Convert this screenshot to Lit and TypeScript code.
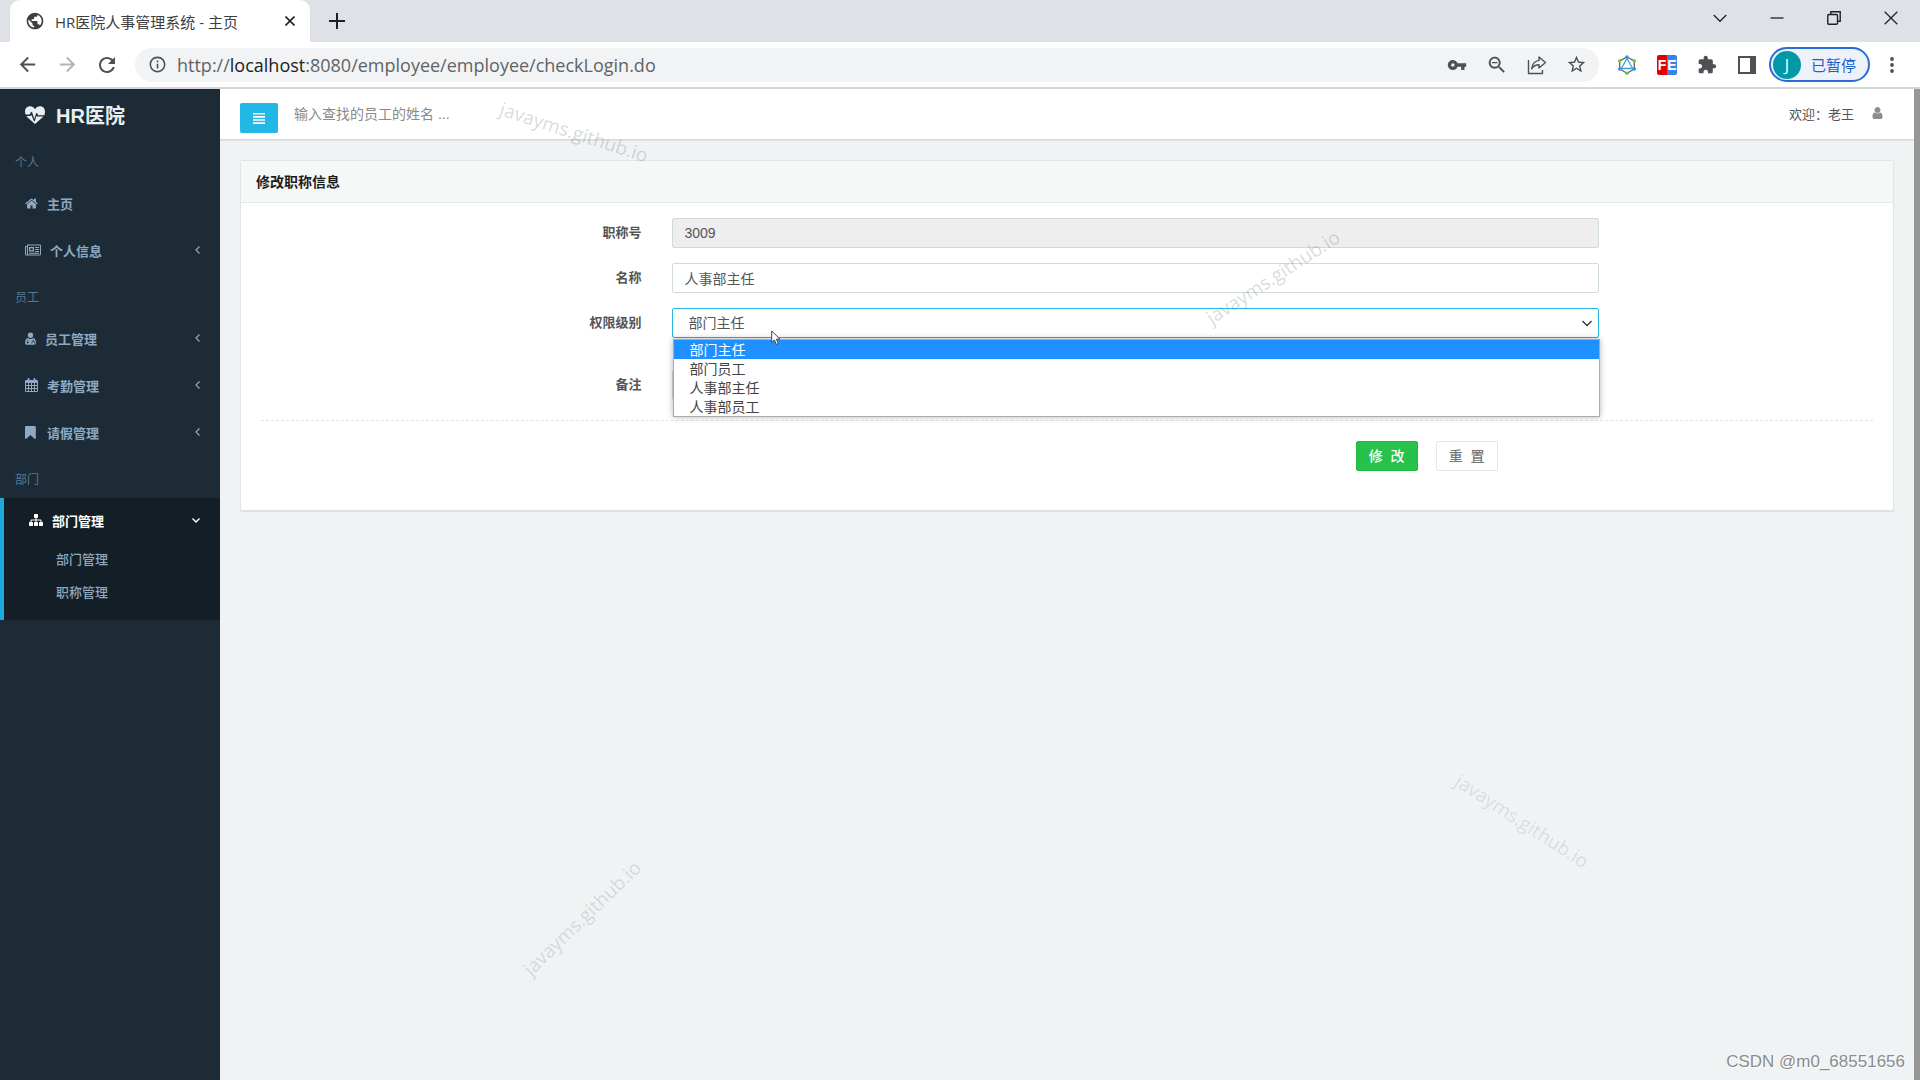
import { LitElement, html, css, svg, nothing } from "lit";
import { customElement, property, state } from "lit/decorators.js";

const material: Record<string, string> = {
  back: "M20 11H7.83l5.59-5.59L12 4l-8 8 8 8 1.41-1.41L7.83 13H20v-2z",
  forward: "M4 11h12.17l-5.59-5.59L12 4l8 8-8 8-1.41-1.41L16.17 13H4v-2z",
  reload:
    "M17.65 6.35C16.2 4.9 14.21 4 12 4c-4.42 0-7.99 3.58-7.99 8s3.57 8 7.99 8c3.73 0 6.84-2.55 7.73-6h-2.08c-.82 2.33-3.04 4-5.65 4-3.31 0-6-2.69-6-6s2.69-6 6-6c1.66 0 3.14.69 4.22 1.78L13 11h7V4l-2.35 2.35z",
  info: "M11 7h2v2h-2zm0 4h2v6h-2zm1-9C6.48 2 2 6.48 2 12s4.48 10 10 10 10-4.48 10-10S17.52 2 12 2zm0 18c-4.41 0-8-3.59-8-8s3.59-8 8-8 8 3.59 8 8-3.59 8-8 8z",
  globe:
    "M12 2C6.48 2 2 6.48 2 12s4.48 10 10 10 10-4.48 10-10S17.52 2 12 2zm-1 17.93c-3.95-.49-7-3.85-7-7.93 0-.62.08-1.21.21-1.79L9 15v1c0 1.1.9 2 2 2v1.93zm6.9-2.54c-.26-.81-1-1.39-1.9-1.39h-1v-3c0-.55-.45-1-1-1H8v-2h2c.55 0 1-.45 1-1V7h2c1.1 0 2-.9 2-2v-.41c2.93 1.19 5 4.06 5 7.41 0 2.08-.8 3.97-2.1 5.39z",
  key: "M12.65 10C11.83 7.67 9.61 6 7 6c-3.31 0-6 2.69-6 6s2.69 6 6 6c2.61 0 4.83-1.67 5.65-4H17v4h4v-4h2v-4H12.65zM7 14c-1.1 0-2-.9-2-2s.9-2 2-2 2 .9 2 2-.9 2-2 2z",
  zoomOut:
    "M15.5 14h-.79l-.28-.27C15.41 12.59 16 11.11 16 9.5 16 5.91 13.09 3 9.5 3S3 5.91 3 9.5 5.91 16 9.5 16c1.61 0 3.09-.59 4.23-1.57l.27.28v.79l5 4.99L20.49 19l-4.99-5zm-6 0C7.01 14 5 11.99 5 9.5S7.01 5 9.5 5 14 7.01 14 9.5 11.99 14 9.5 14zM6.5 8.8h6v1.4h-6z",
  star: "M22 9.24l-7.19-.62L12 2 9.19 8.63 2 9.24l5.46 4.73L5.82 21 12 17.27 18.18 21l-1.63-7.03L22 9.24zM12 15.4l-3.76 2.27 1-4.28-3.32-2.88 4.38-.38L12 6.1l1.71 4.04 4.38.38-3.32 2.88 1 4.28L12 15.4z",
  extension:
    "M20.5 11H19V7c0-1.1-.9-2-2-2h-4V3.5C13 2.12 11.88 1 10.5 1S8 2.12 8 3.5V5H4c-1.1 0-1.99.9-1.99 2v3.8H3.5c1.49 0 2.7 1.21 2.7 2.7s-1.21 2.7-2.7 2.7H2V20c0 1.1.9 2 2 2h3.8v-1.5c0-1.49 1.21-2.7 2.7-2.7 1.49 0 2.7 1.21 2.7 2.7V22H17c1.1 0 2-.9 2-2v-4h1.5c1.38 0 2.5-1.12 2.5-2.5S21.88 11 20.5 11z",
};

const mIcon = (name: string, size = 22) =>
  html`<svg width=${size} height=${size} viewBox="0 0 24 24" fill="currentColor" aria-hidden="true">
    <path d=${material[name]}></path>
  </svg>`;

interface Glyph {
  box: string;
  width: number;
  height: number;
  shape: unknown;
}

const glyphs: Record<string, Glyph> = {
  home: {
    box: "60 200 1672 1400",
    width: 13,
    height: 11,
    shape: svg`<path d="M1472 992v480q0 26-19 45t-45 19h-384v-384h-256v384h-384q-26 0-45-19t-19-45v-480q0-1 .5-3t.5-3l575-474 575 474q1 2 1 6zm223-69l-62 74q-8 9-21 11h-3q-13 0-21-7l-692-577-692 577q-12 8-24 7-13-2-21-11l-62-74q-8-10-7-23.5t11-21.5l719-599q32-26 76-26t76 26l244 204v-195q0-14 9-23t23-9h192q14 0 23 9t9 23v408l219 182q10 8 11 21.5t-7 23.5z"/>`,
  },
  news: {
    box: "0 0 16 12",
    width: 16,
    height: 12,
    shape: svg`<path fill-rule="evenodd" d="M2 .5h13q1 0 1 1v8.500q0 1.500-1.500 1.500h-13Q0 11.500 0 10V2h2zM1 3v7q0 .6.500.6T2 10V3zM3 1.500V10.600h11.400q.6 0 .6-.6V1.500z"/><path fill-rule="evenodd" d="M4 3h5v4.500H4zM5.300 4.200v2h2.400v-2z"/><path d="M10 3h4v1h-4zM10 5h4v1h-4zM10 7h4v1h-4zM4 8.800h10v1H4z"/>`,
  },
  doctor: {
    box: "0 0 11 13",
    width: 11,
    height: 13,
    shape: svg`<circle cx="5.500" cy="3.300" r="2.700"/><path fill-rule="evenodd" d="M2.800 6.100Q5.500 8 8.200 6.100 10.900 6.600 10.900 11q0 1.800-1.700 1.800H1.800Q.1 12.800.1 11 .1 6.600 2.800 6.100zM2.600 7.600v1.900q-.8.3-.8 1.100a.9.900 0 1 0 1.800 0q0-.8-.4-1.100V7.400zM7.800 7.400v1.400Q6.500 9 6.500 10.400v1h.7v-1q0-.9.9-.9t.9.900v1h.7v-1Q9.700 9 8.500 8.800V7.500z"/>`,
  },
  calendar: {
    box: "0 0 13 14",
    width: 13,
    height: 14,
    shape: svg`<path fill-rule="evenodd" d="M1 2h1.500V1q0-1 1-1t1 1v1h4V1q0-1 1-1t1 1v1H12q1 0 1 1v10q0 1-1 1H1q-1 0-1-1V3q0-1 1-1zM1 5v2h2V5zM4 5v2h2V5zM7 5v2h2V5zM10 5v2h2V5zM1 8v2h2V8zM4 8v2h2V8zM7 8v2h2V8zM10 8v2h2V8zM1 11v2h2v-2zM4 11v2h2v-2zM7 11v2h2v-2zM10 11v2h2v-2z"/>`,
  },
  bookmark: {
    box: "256 128 1536 1536",
    width: 13,
    height: 13,
    shape: svg`<path d="M1420 128q23 0 44 9 33 13 52.500 41t19.500 62v1289q0 34-19.500 62t-52.500 41q-19 8-44 8-48 0-83-32l-441-424-441 424q-36 33-83 33-23 0-44-9-33-13-52.500-41t-19.500-62v-1289q0-34 19.500-62t52.500-41q21-9 44-9h1048z"/>`,
  },
  sitemap: {
    box: "0 128 1792 1536",
    width: 14,
    height: 12,
    shape: svg`<path d="M1792 1248v320q0 40-28 68t-68 28h-320q-40 0-68-28t-28-68v-320q0-40 28-68t68-28h96v-192h-512v192h96q40 0 68 28t28 68v320q0 40-28 68t-68 28h-320q-40 0-68-28t-28-68v-320q0-40 28-68t68-28h96v-192h-512v192h96q40 0 68 28t28 68v320q0 40-28 68t-68 28h-320q-40 0-68-28t-28-68v-320q0-40 28-68t68-28h96v-192q0-52 38-90t90-38h512v-192h-96q-40 0-68-28t-28-68v-320q0-40 28-68t68-28h320q40 0 68 28t28 68v320q0 40-28 68t-68 28h-96v192h512q52 0 90 38t38 90v192h96q40 0 68 28t28 68z"/>`,
  },
  user: {
    box: "256 128 1280 1536",
    width: 11,
    height: 12,
    shape: svg`<path d="M1536 1399q0 109-62.500 187t-150.500 78h-854q-88 0-150.500-78t-62.500-187q0-85 8.500-160.500t31.500-152 58.500-131 94-89 134.500-34.500q131 128 313 128t313-128q76 0 134.500 34.500t94 89 58.500 131 31.500 152 8.500 160.500zm-256-887q0 159-112.500 271.500t-271.500 112.500-271.500-112.500-112.500-271.500 112.500-271.500 271.500-112.500 271.500 112.500 112.500 271.500z"/>`,
  },
  heartbeat: {
    box: "0 0 20 18",
    width: 20,
    height: 18,
    shape: svg`<path d="M10 3.200C8.600.9 7 .2 5.200.2 2 .2 0 2.300 0 5.600q0 1.400.6 2.900h4.200l1.100-2.300q.6-.9 1.200.1l2.200 6.600 1.800-5.300q.6-1 1.200-.1l.9 1.700h6.200q.6-1.700.6-3.600C20 2.300 18 .2 14.800.2 13 .2 11.400.9 10 3.200z"/><path d="M1.400 10q.7 1 1.500 1.800L10 18l7.100-6.200q.9-.9 1.400-1.400h-6q-.5 0-.7-.5l-.2-.4-1.700 5.200q-.6 1-1.200 0L6.500 8.900l-.4.700q-.2.400-.7.400z"/>`,
  },
};

const glyph = (name: string) => {
  const g = glyphs[name];
  return html`<svg width=${g.width} height=${g.height} viewBox=${g.box} fill="currentColor" aria-hidden="true">
    ${g.shape}
  </svg>`;
};

const reset = css`
  * {
    box-sizing: border-box;
  }
  button,
  input,
  select {
    font: inherit;
    color: inherit;
  }
  button {
    padding: 0;
    border: 0;
    background: none;
    display: flex;
    align-items: center;
    justify-content: center;
  }
  svg {
    display: block;
    flex: none;
  }
  a {
    color: inherit;
    text-decoration: none;
  }
`;

@customElement("browser-chrome")
export class BrowserChrome extends LitElement {
  static styles = [
    reset,
    css`
      :host {
        display: block;
        font-family: "Open Sans", "Noto Sans CJK SC", sans-serif;
        color: #3c4043;
      }
      .tabs {
        display: flex;
        align-items: flex-end;
        height: 42px;
        padding-left: 10px;
        background: #dee1e6;
      }
      .tab {
        display: flex;
        align-items: center;
        width: 300px;
        height: 42px;
        padding: 0 8px 0 15px;
        border-radius: 10px 10px 0 0;
        background: #fff;
      }
      .tab-title {
        flex: 1;
        margin-left: 10px;
        font-size: 15px;
        white-space: nowrap;
      }
      .square {
        width: 24px;
        height: 24px;
        color: #4d5156;
      }
      .square.dark {
        color: #202124;
      }
      .square.faded {
        color: #b0b3b7;
      }
      .new-tab {
        align-self: center;
        margin-left: 15px;
      }
      .window {
        display: flex;
        align-self: flex-start;
        gap: 33px;
        margin-left: auto;
        padding: 6px 17px 0 0;
      }
      .toolbar {
        display: flex;
        align-items: center;
        gap: 16px;
        height: 47px;
        padding: 0 16px 0 15px;
        border-bottom: 2px solid #d4d6d9;
        background: #fff;
      }
      .address {
        display: flex;
        flex: 1;
        align-items: center;
        gap: 16px;
        height: 34px;
        padding: 0 10px;
        border-radius: 17px;
        background: #f1f3f4;
      }
      .site {
        display: flex;
        flex: 1;
        align-items: center;
        gap: 8px;
      }
      .url {
        font-size: 18px;
        line-height: 24px;
        color: #5f6368;
      }
      .host {
        color: #202124;
      }
      .account {
        display: flex;
        align-items: center;
        gap: 10px;
      }
      .profile {
        gap: 10px;
        height: 35px;
        padding: 0 12px 0 2px;
        border: 2px solid #2b6bd6;
        border-radius: 18px;
        background: #edf1fa;
        color: #1a5fd0;
        font-size: 15px;
      }
      .avatar {
        display: grid;
        place-items: center;
        width: 28px;
        height: 28px;
        border-radius: 50%;
        background: #0097a7;
        color: #fff;
        font-size: 16px;
      }
      .fe {
        display: flex;
        width: 20px;
        height: 20px;
        border-radius: 2px;
        overflow: hidden;
        font: bold 14px/20px "Liberation Sans", sans-serif;
        color: #fff;
      }
      .fe-left,
      .fe-right {
        flex: 1;
        text-align: center;
        background: #e80000;
      }
      .fe-right {
        background: #3b82ea;
      }
    `,
  ];

  render() {
    return html`
      <div class="tabs">
        <div class="tab">
          ${mIcon("globe", 20)}
          <span class="tab-title">HR医院人事管理系统 - 主页</span>
          <button class="square dark" aria-label="关闭标签页">
            <svg width="10" height="10" viewBox="0 0 10 10" stroke="currentColor" stroke-width="1.600">
              <path d="M.5.5l9 9M9.500.5l-9 9"></path>
            </svg>
          </button>
        </div>
        <button class="square dark new-tab" aria-label="新标签页">
          <svg width="16" height="16" viewBox="0 0 16 16" stroke="currentColor" stroke-width="2">
            <path d="M8 0v16M0 8h16"></path>
          </svg>
        </button>
        <div class="window">
          <button class="square dark" aria-label="搜索标签页">
            <svg width="14" height="14" viewBox="0 0 14 14" fill="none" stroke="currentColor" stroke-width="1.300">
              <path d="M.7 4L7 10.300 13.300 4"></path>
            </svg>
          </button>
          <button class="square dark" aria-label="最小化">
            <svg width="14" height="14" viewBox="0 0 14 14" stroke="currentColor" stroke-width="1.300">
              <path d="M0.500 7h13"></path>
            </svg>
          </button>
          <button class="square dark" aria-label="还原">
            <svg width="14" height="14" viewBox="0 0 14 14" fill="none" stroke="currentColor" stroke-width="1.400">
              <rect x=".8" y="3.500" width="9.700" height="9.700" rx="1"></rect>
              <path d="M3.800 3.500V.8h9.400v9.400h-2.700"></path>
            </svg>
          </button>
          <button class="square dark" aria-label="关闭">
            <svg width="14" height="14" viewBox="0 0 14 14" stroke="currentColor" stroke-width="1.300">
              <path d="M.7.7l12.600 12.600M13.300.7L.7 13.300"></path>
            </svg>
          </button>
        </div>
      </div>
      <div class="toolbar">
        <button class="square" aria-label="后退">${mIcon("back", 23)}</button>
        <button class="square faded" aria-label="前进">${mIcon("forward", 23)}</button>
        <button class="square" aria-label="重新加载">${mIcon("reload", 24)}</button>
        <div class="address">
          <div class="site">
            <button class="square" aria-label="网站信息">${mIcon("info", 19)}</button>
            <span class="url">http://<span class="host">localhost</span>:8080/employee/employee/checkLogin.do</span>
          </div>
          <button class="square" aria-label="密码">${mIcon("key", 20)}</button>
          <button class="square" aria-label="缩放">${mIcon("zoomOut", 22)}</button>
          <button class="square" aria-label="分享">
            <svg width="20" height="20" viewBox="0 0 20 20" fill="none" stroke="currentColor" stroke-width="1.400" stroke-linejoin="round">
              <path d="M1.500 5v13.500h14V15"></path>
              <path d="M12 2l6.500 5.500L12 13v-3.200c-3 0-5.500 1.200-7.300 4C5.300 9.200 7.700 6 12 5.400z"></path>
            </svg>
          </button>
          <button class="square" aria-label="收藏">${mIcon("star", 21)}</button>
        </div>
        <button class="square" aria-label="扩展 1">
          <svg width="20" height="22" viewBox="0 0 20 22" fill="none">
            <path d="M10 3L17.300 7v8L10 19.300 2.700 15V7z" stroke="#5a6672" stroke-width="1.300"></path>
            <path d="M10 4.500L4.300 14.500h11.400z" stroke="#3aa0e0" stroke-width="1.300"></path>
            <g fill="#2f8fd8"><circle cx="10" cy="3" r="1.700"></circle><circle cx="2.700" cy="15" r="1.700"></circle><circle cx="17.300" cy="15" r="1.700"></circle></g>
            <g fill="#74c13c"><circle cx="2.700" cy="7" r="1.700"></circle><circle cx="17.300" cy="7" r="1.700"></circle><circle cx="10" cy="19.300" r="1.700"></circle></g>
          </svg>
        </button>
        <button class="square" aria-label="扩展 2">
          <span class="fe"><span class="fe-left">F</span><span class="fe-right">E</span></span>
        </button>
        <button class="square" aria-label="扩展程序">${mIcon("extension", 20)}</button>
        <div class="account">
          <button class="square" aria-label="侧边栏">
            <svg width="18" height="18" viewBox="0 0 18 18" fill="currentColor">
              <path fill-rule="evenodd" d="M0 0h18v18H0zM2 2v14h10V2z"></path>
            </svg>
          </button>
          <button class="profile"><span class="avatar">J</span>已暂停</button>
          <button class="square" aria-label="菜单">
            <svg width="4" height="16" viewBox="0 0 4 16" fill="currentColor">
              <circle cx="2" cy="2" r="1.900"></circle><circle cx="2" cy="8" r="1.900"></circle><circle cx="2" cy="14" r="1.900"></circle>
            </svg>
          </button>
        </div>
      </div>
    `;
  }
}

interface NavItem {
  label: string;
  icon: string;
  more?: boolean;
  children?: string[];
}

const sections: { title: string; items: NavItem[] }[] = [
  {
    title: "个人",
    items: [
      { label: "主页", icon: "home" },
      { label: "个人信息", icon: "news", more: true },
    ],
  },
  {
    title: "员工",
    items: [
      { label: "员工管理", icon: "doctor", more: true },
      { label: "考勤管理", icon: "calendar", more: true },
      { label: "请假管理", icon: "bookmark", more: true },
    ],
  },
  {
    title: "部门",
    items: [{ label: "部门管理", icon: "sitemap", children: ["部门管理", "职称管理"] }],
  },
];

@customElement("side-nav")
export class SideNav extends LitElement {
  static styles = [
    reset,
    css`
      :host {
        display: block;
        width: 220px;
        background: #1c2b36;
        color: #8fa9c1;
        font-size: 13px;
      }
      .brand {
        display: flex;
        align-items: center;
        gap: 11px;
        height: 54px;
        padding: 0 0 3px 25px;
        font-size: 20px;
        font-weight: bold;
        color: #e8eef2;
      }
      .section {
        margin: 0;
        height: 38px;
        padding-left: 15px;
        font-size: 12px;
        font-weight: normal;
        line-height: 40px;
        color: #5a7891;
      }
      .items {
        display: grid;
        gap: 1px;
        margin: 0 0 4px;
        padding: 0;
        list-style: none;
      }
      .link {
        display: flex;
        align-items: center;
        gap: 9px;
        height: 46px;
        padding: 0 20px 2px 25px;
        font-weight: bold;
      }
      .arrow {
        margin-left: auto;
      }
      .open {
        padding-bottom: 10px;
        border-left: 4px solid #1caadc;
        background: #131e26;
      }
      .open > .link {
        color: #fff;
      }
      .children {
        margin: 0;
        padding: 0;
        list-style: none;
      }
      .child {
        display: block;
        height: 33px;
        padding-left: 52px;
        font-weight: 500;
        line-height: 32px;
      }
    `,
  ];

  private item(item: NavItem) {
    return html`<li class=${item.children ? "open" : "closed"}>
      <a class="link" href="#">
        ${glyph(item.icon)}<span>${item.label}</span>
        ${item.more
          ? html`<svg class="arrow" width="5" height="8" viewBox="0 0 5 8" fill="none" stroke="currentColor" stroke-width="1.200"><path d="M4.500.5L1 4l3.500 3.500"></path></svg>`
          : nothing}
        ${item.children
          ? html`<svg class="arrow" width="8" height="5" viewBox="0 0 8 5" fill="none" stroke="currentColor" stroke-width="1.400"><path d="M.5.5L4 4 7.500.5"></path></svg>`
          : nothing}
      </a>
      ${item.children
        ? html`<ul class="children">
            ${item.children.map((c) => html`<li><a class="child" href="#">${c}</a></li>`)}
          </ul>`
        : nothing}
    </li>`;
  }

  render() {
    return html`<nav>
      <div class="brand">${glyph("heartbeat")}<span>HR医院</span></div>
      ${sections.map(
        (s) => html`<h2 class="section">${s.title}</h2>
          <ul class="items">
            ${s.items.map((i) => this.item(i))}
          </ul>`
      )}
    </nav>`;
  }
}

@customElement("title-form")
export class TitleForm extends LitElement {
  @property({ type: Array }) levels = ["部门主任", "部门员工", "人事部主任", "人事部员工"];
  @state() private level = "部门主任";

  static styles = [
    reset,
    css`
      :host {
        display: block;
        border: 1px solid #dee5e7;
        border-radius: 2px;
        background: #fff;
        box-shadow: 0 1px 1px rgba(0, 0, 0, 0.08);
        color: #58666e;
      }
      .heading {
        margin: 0;
        height: 42px;
        padding: 0 15px;
        border-bottom: 1px solid #e2e9eb;
        background: #f6f8f8;
        font-size: 14px;
        font-weight: bold;
        line-height: 43px;
        color: #1d1d1d;
      }
      .form {
        padding: 15px 20px 24px;
      }
      .row {
        display: grid;
        grid-template-columns: repeat(12, 1fr);
        margin: 0 -15px 15px;
      }
      .row.spaced {
        margin-top: 32px;
        margin-bottom: 20px;
      }
      .label {
        grid-column: span 3;
        padding: 0 15px;
        font-size: 13px;
        font-weight: bold;
        line-height: 30px;
        text-align: right;
        color: #555;
      }
      .field {
        position: relative;
        grid-column: span 7;
        padding: 0 15px;
      }
      .input {
        display: block;
        width: 100%;
        height: 30px;
        margin: 0;
        padding: 0 12px;
        border: 1px solid #cfdadd;
        border-radius: 2px;
        outline: 0;
        background: #fff;
        font-size: 14px;
        color: #555;
      }
      .input[readonly] {
        background: #eee;
      }
      select.input {
        appearance: none;
        padding: 0 16px;
        border-color: #23b7e5;
      }
      .caret {
        position: absolute;
        top: 12px;
        right: 22px;
        color: #333;
        pointer-events: none;
      }
      .menu {
        position: absolute;
        z-index: 1;
        top: 31px;
        left: 16px;
        right: 14px;
        margin: 0;
        padding: 0;
        border: 1px solid #aaa;
        list-style: none;
        background: #fff;
        box-shadow: 0 0 6px rgba(0, 0, 0, 0.3);
      }
      .option {
        height: 19px;
        padding-left: 16px;
        font-size: 14px;
        line-height: 20px;
        color: #444;
      }
      .option.active {
        background: #1e90ff;
        color: #fff;
      }
      .rule {
        height: 0;
        margin: 0 0 20px;
        border: 0;
        border-top: 1px dashed #dee5e7;
      }
      .actions {
        grid-column: 9 / span 4;
        display: flex;
        gap: 18px;
        padding-left: 15px;
      }
      .button {
        width: 62px;
        height: 30px;
        padding-bottom: 2px;
        border: 1px solid #e4e7ea;
        border-radius: 2px;
        background: #fff;
        font-size: 14px;
        font-weight: 500;
        white-space: pre;
        color: #777;
      }
      .button.primary {
        border-color: #23b83f;
        background: #27c24c;
        color: #fff;
      }
    `,
  ];

  render() {
    return html`
      <h1 class="heading">修改职称信息</h1>
      <form class="form">
        <div class="row">
          <label class="label" for="number">职称号</label>
          <div class="field"><input class="input" id="number" readonly .value=${"3009"} /></div>
        </div>
        <div class="row">
          <label class="label" for="name">名称</label>
          <div class="field"><input class="input" id="name" .value=${"人事部主任"} /></div>
        </div>
        <div class="row">
          <label class="label" for="level">权限级别</label>
          <div class="field">
            <select class="input" id="level">
              ${this.levels.map((l) => html`<option ?selected=${l === this.level}>${l}</option>`)}
            </select>
            <svg class="caret" width="10" height="7" viewBox="0 0 10 7" fill="none" stroke="currentColor" stroke-width="1.300">
              <path d="M.5 1L5 5.500 9.500 1"></path>
            </svg>
            <ul class="menu" role="listbox" aria-label="权限级别">
              ${this.levels.map(
                (l) =>
                  html`<li
                    class="option ${l === this.level ? "active" : ""}"
                    role="option"
                    aria-selected=${l === this.level}
                    @click=${() => (this.level = l)}
                  >${l}</li>`
              )}
            </ul>
          </div>
        </div>
        <div class="row spaced">
          <label class="label" for="remark">备注</label>
          <div class="field"><input class="input" id="remark" /></div>
        </div>
        <hr class="rule" />
        <div class="row">
          <div class="actions">
            <button class="button primary" type="submit">修  改</button>
            <button class="button" type="reset">重  置</button>
          </div>
        </div>
      </form>
    `;
  }
}

@customElement("app-root")
export class AppRoot extends LitElement {
  static styles = [
    reset,
    css`
      :host {
        position: relative;
        display: flex;
        flex-direction: column;
        min-height: 100vh;
        overflow: hidden;
        font-family: "Liberation Sans", "Noto Sans CJK SC", sans-serif;
        font-size: 14px;
      }
      .page {
        display: flex;
        flex: 1;
      }
      .content {
        flex: 1;
        min-width: 0;
        background: #eff3f4;
      }
      .topbar {
        display: flex;
        align-items: center;
        height: 51px;
        padding: 0 31px 0 20px;
        border-bottom: 1px solid #d5dadd;
        background: #fff;
        box-shadow: 0 1px 1px rgba(0, 0, 0, 0.06);
      }
      .toggle {
        width: 38px;
        height: 30px;
        margin: 8px 16px 0 0;
        border-radius: 2px;
        background: #23b7e5;
      }
      .search {
        flex: 1;
        min-width: 0;
        height: 30px;
        padding: 0;
        border: 0;
        outline: 0;
        background: none;
        font-size: 14px;
      }
      .search::placeholder {
        color: #8a8a8a;
        opacity: 1;
      }
      .account {
        display: flex;
        align-items: center;
        gap: 18px;
        padding-bottom: 2px;
        font-size: 13px;
        color: #555;
      }
      .account svg {
        color: #8d8d8d;
      }
      .main {
        padding: 20px;
      }
      .scrollbar {
        width: 6px;
        background: #979797;
      }
      .mark {
        position: absolute;
        z-index: 2;
        width: 160px;
        height: 28px;
        font: 19px/28px "Open Sans", sans-serif;
        text-align: center;
        color: rgba(90, 100, 110, 0.24);
        pointer-events: none;
      }
      .mark.first {
        left: 494px;
        top: 118px;
        transform: rotate(18deg);
      }
      .mark.second {
        left: 1193px;
        top: 263px;
        transform: rotate(-33deg);
      }
      .mark.third {
        left: 1442px;
        top: 807px;
        transform: rotate(33deg);
        color: rgba(90, 100, 110, 0.16);
      }
      .mark.fourth {
        left: 502px;
        top: 904px;
        transform: rotate(-44deg);
        color: rgba(90, 100, 110, 0.2);
      }
      .credit {
        position: absolute;
        right: 15px;
        bottom: 8px;
        font-size: 17px;
        line-height: 20px;
        color: #8a8d90;
        text-shadow: 1px 1px 0 #fff;
      }
      .pointer {
        position: absolute;
        z-index: 3;
        left: 771px;
        top: 330px;
      }
    `,
  ];

  render() {
    return html`
      <browser-chrome></browser-chrome>
      <div class="page">
        <side-nav></side-nav>
        <div class="content">
          <header class="topbar">
            <button class="toggle" aria-label="切换菜单">
              <svg width="12" height="11" viewBox="0 0 12 11" fill="#fff">
                <path d="M0 0h12v1.600H0zM0 3.100h12v1.600H0zM0 6.200h12v1.600H0zM0 9.300h12v1.600H0z"></path>
              </svg>
            </button>
            <input class="search" aria-label="查找员工" placeholder="输入查找的员工的姓名 ..." />
            <a class="account" href="#"><span>欢迎：老王</span>${glyph("user")}</a>
          </header>
          <main class="main"><title-form></title-form></main>
        </div>
        <div class="scrollbar"></div>
      </div>
      <span class="mark first">javayms.github.io</span>
      <span class="mark second">javayms.github.io</span>
      <span class="mark third">javayms.github.io</span>
      <span class="mark fourth">javayms.github.io</span>
      <svg class="pointer" width="10" height="16" viewBox="0 0 10 16" fill="#fff" stroke="#444" stroke-width="1">
        <path d="M.7 1v11.500l2.700-2.600 1.900 4.500 2-.8-1.900-4.400h3.700z"></path>
      </svg>
      <span class="credit">CSDN @m0_68551656</span>
    `;
  }
}
